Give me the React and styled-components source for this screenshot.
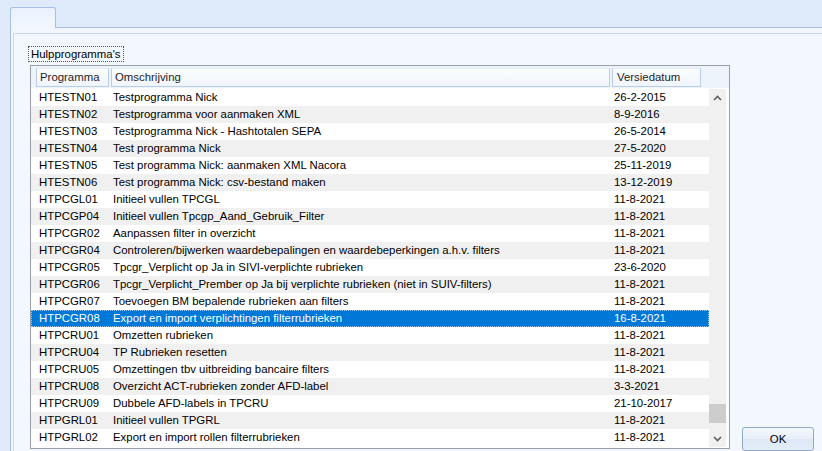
import React from 'react'
import styled, { createGlobalStyle } from 'styled-components'

const GlobalStyle = createGlobalStyle`
    html, body {
        margin: 0;
        padding: 0;
        background: #dfeafa;
    }
    body {
        font-family: "Liberation Sans", Arial, sans-serif;
        font-size: 11.4px;
        color: #000;
    }
`

const Window = styled.div`
    width: 822px;
    height: 451px;
    display: flex;
    flex-direction: column;
    overflow: hidden;
    background: #dfeafa;
`

const TabStrip = styled.div`
    height: 27px;
    display: flex;
    align-items: flex-end;
    padding-left: 10px;
    box-sizing: border-box;
`

const Tab = styled.div`
    width: 46px;
    height: 21px;
    box-sizing: border-box;
    border: 1px solid #a6bfe3;
    border-bottom: none;
    border-radius: 3px 3px 0 0;
    background: linear-gradient(#e9f1fd, #f2f7fe);
    margin-bottom: -1px;
    position: relative;
    z-index: 1;
`

const TabPage = styled.div`
    flex: 1;
    display: flex;
    margin-left: 10px;
    border-top: 1px solid #a6bfe3;
    border-left: 1px solid #a6bfe3;
    background: #f2f7fe;
    min-height: 0;
`

const Page = styled.div`
    flex: 1;
    display: flex;
    margin: 5px 0 0 2px;
    padding: 12px 0 0 14px;
    border-top: 1px solid #c9d9ef;
    border-left: 1px solid #c9d9ef;
    background: #f3f7fe;
    min-height: 0;
`

const LeftColumn = styled.div`
    display: flex;
    flex-direction: column;
    width: 702px;
`

const GroupLabel = styled.div`
    align-self: flex-start;
    height: 16px;
    line-height: 15px;
    padding: 0 2px;
    box-sizing: border-box;
    border: 1px dotted #555;
    margin-bottom: 3px;
`

const ListBox = styled.div`
    margin-left: 2px;
    width: 700px;
    height: 384px;
    box-sizing: border-box;
    border: 1px solid #9a9ea6;
    background: #fff;
    display: flex;
    flex-direction: column;
`

const Header = styled.div`
    height: 22px;
    box-sizing: border-box;
    padding: 2px 0 0 5px;
    display: flex;
    gap: 2px;
    background: #eef4fc;
`

const HeaderCell = styled.div`
    width: ${p => p.$w}px;
    height: 19px;
    box-sizing: border-box;
    padding-left: ${p => p.$pad}px;
    line-height: 17px;
    border: 1px solid #b9cde9;
    border-top-color: #e2ebf8;
    background: linear-gradient(#fbfdff, #f0f5fc);
    color: #1e1e1e;
`

const Body = styled.div`
    flex: 1;
    display: flex;
    padding-top: 1px;
    min-height: 0;
`

const Rows = styled.div`
    flex: 1;
    display: flex;
    flex-direction: column;
`

const Row = styled.div`
    height: 17px;
    display: flex;
    box-sizing: border-box;
    line-height: 15px;
    background: ${p => (p.$selected ? '#0078d7' : p.$alt ? '#f0f0f0' : '#fff')};
    color: ${p => (p.$selected ? '#fff' : '#000')};
    border: 1px ${p => (p.$selected ? 'dotted #9cc8ee' : 'solid transparent')};
`

const Cell = styled.div`
    width: ${p => p.$w}px;
    padding-left: ${p => p.$pad}px;
    box-sizing: border-box;
    white-space: nowrap;
    overflow: hidden;
    flex: ${p => (p.$grow ? 1 : 'none')};
`

const ScrollBar = styled.div`
    width: 17px;
    margin-right: 3px;
    margin-bottom: 1px;
    display: flex;
    flex-direction: column;
    background: #f0f0f0;
`

const ScrollArrow = styled.div`
    height: 17px;
    display: flex;
    align-items: center;
    justify-content: center;
`

const Track = styled.div`
    flex: 1;
    display: flex;
    flex-direction: column;
    justify-content: flex-end;
    padding-bottom: 7px;
`

const Thumb = styled.div`
    height: 19px;
    background: #cdcdcd;
`

const RightColumn = styled.div`
    display: flex;
    flex-direction: column;
    justify-content: flex-end;
    padding-left: 12px;
`

const Button = styled.button`
    width: 72px;
    height: 24px;
    margin-bottom: 0;
    font-family: "Liberation Sans", Arial, sans-serif;
    font-size: 11.4px;
    color: #000;
    border: 1px solid #8fa9cc;
    border-radius: 3px;
    background: linear-gradient(#f4f8fd 0%, #e8eff9 50%, #dde7f5 51%, #e4ecf8 100%);
    padding: 0 0 1px;
`

const rows = [
    ['HTESTN01', 'Testprogramma Nick', '26-2-2015'],
    ['HTESTN02', 'Testprogramma voor aanmaken XML', '8-9-2016'],
    ['HTESTN03', 'Testprogramma Nick - Hashtotalen SEPA', '26-5-2014'],
    ['HTESTN04', 'Test programma Nick', '27-5-2020'],
    ['HTESTN05', 'Test programma Nick: aanmaken XML Nacora', '25-11-2019'],
    ['HTESTN06', 'Test programma Nick: csv-bestand maken', '13-12-2019'],
    ['HTPCGL01', 'Initieel vullen TPCGL', '11-8-2021'],
    ['HTPCGP04', 'Initieel vullen Tpcgp_Aand_Gebruik_Filter', '11-8-2021'],
    ['HTPCGR02', 'Aanpassen filter in overzicht', '11-8-2021'],
    ['HTPCGR04', 'Controleren/bijwerken waardebepalingen en waardebeperkingen a.h.v. filters', '11-8-2021'],
    ['HTPCGR05', 'Tpcgr_Verplicht op Ja in SIVI-verplichte rubrieken', '23-6-2020'],
    ['HTPCGR06', 'Tpcgr_Verplicht_Prember op Ja bij verplichte rubrieken (niet in SUIV-filters)', '11-8-2021'],
    ['HTPCGR07', 'Toevoegen BM bepalende rubrieken aan filters', '11-8-2021'],
    ['HTPCGR08', 'Export en import verplichtingen filterrubrieken', '16-8-2021'],
    ['HTPCRU01', 'Omzetten rubrieken', '11-8-2021'],
    ['HTPCRU04', 'TP Rubrieken resetten', '11-8-2021'],
    ['HTPCRU05', 'Omzettingen tbv uitbreiding bancaire filters', '11-8-2021'],
    ['HTPCRU08', 'Overzicht ACT-rubrieken zonder AFD-label', '3-3-2021'],
    ['HTPCRU09', 'Dubbele AFD-labels in TPCRU', '21-10-2017'],
    ['HTPGRL01', 'Initieel vullen TPGRL', '11-8-2021'],
    ['HTPGRL02', 'Export en import rollen filterrubrieken', '11-8-2021'],
]

const Chevron = ({ up }) => (
    <svg width="9" height="6" viewBox="0 0 9 6">
        <polyline
            points={up ? '1,5 4.5,1.5 8,5' : '1,1 4.5,4.5 8,1'}
            fill="none"
            stroke="#5f5f5f"
            strokeWidth="1.6"
        />
    </svg>
)

const App = () => {
  return (
    <Window>
        <GlobalStyle />
        <TabStrip>
            <Tab />
        </TabStrip>
        <TabPage>
            <Page>
                <LeftColumn>
                    <GroupLabel>Hulpprogramma's</GroupLabel>
                    <ListBox>
                        <Header>
                            <HeaderCell $w={73} $pad={3}>Programma</HeaderCell>
                            <HeaderCell $w={499} $pad={3}>Omschrijving</HeaderCell>
                            <HeaderCell $w={89} $pad={4}>Versiedatum</HeaderCell>
                        </Header>
                        <Body>
                            <Rows>
                                {rows.map(([code, desc, date], i) => (
                                    <Row key={code} $alt={i % 2 === 1} $selected={code === 'HTPCGR08'}>
                                        <Cell $w={78} $pad={7}>{code}</Cell>
                                        <Cell $w={500} $pad={3}>{desc}</Cell>
                                        <Cell $grow $pad={4}>{date}</Cell>
                                    </Row>
                                ))}
                            </Rows>
                            <ScrollBar>
                                <ScrollArrow><Chevron up /></ScrollArrow>
                                <Track>
                                    <Thumb />
                                </Track>
                                <ScrollArrow><Chevron /></ScrollArrow>
                            </ScrollBar>
                        </Body>
                    </ListBox>
                </LeftColumn>
                <RightColumn>
                    <Button>OK</Button>
                </RightColumn>
            </Page>
        </TabPage>
    </Window>
  )
}

export default App
